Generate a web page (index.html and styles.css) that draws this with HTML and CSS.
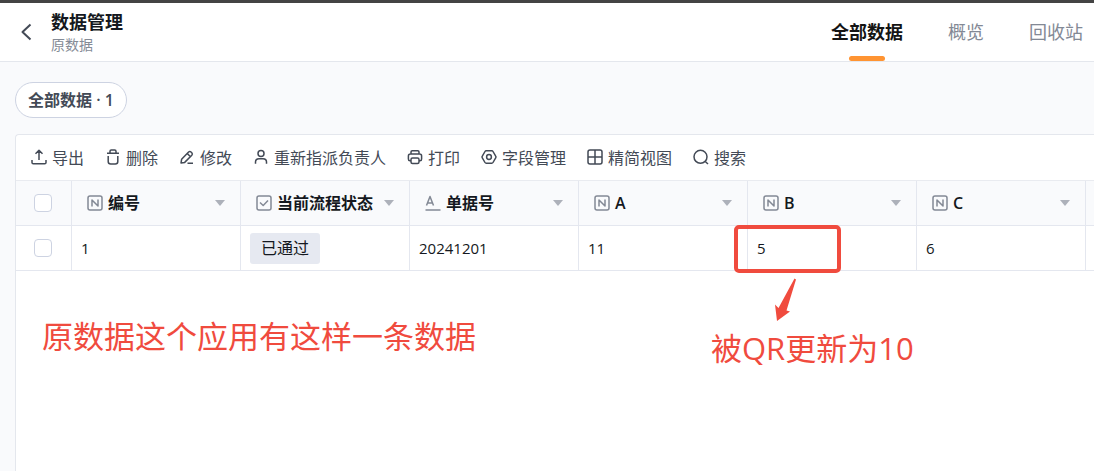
FILE: index.html
```html
<!DOCTYPE html>
<html lang="zh-CN">
<head>
<meta charset="UTF-8">
<meta name="viewport" content="width=device-width, initial-scale=1.0">
<title>数据管理</title>
<link rel="stylesheet" href="styles.css">
</head>
<body>

<!-- Shared icons -->
<svg class="sprite" aria-hidden="true">
    <symbol id="icon-number" viewBox="0 0 16 16">
        <rect x="1" y="1" width="14" height="14" rx="2"/>
        <path d="M5 11.5V5L11 11V4.5"/>
    </symbol>
    <symbol id="icon-select" viewBox="0 0 16 16">
        <rect x="1" y="1" width="14" height="14" rx="2"/>
        <path d="M4 7.5L7.2 10.5L12 5.5"/>
    </symbol>
    <symbol id="icon-text" viewBox="0 0 16 16">
        <path d="M1.5 10.5L5 1.5L8.5 10.5M2.7 8H7.3M.5 15H15.5"/>
    </symbol>
</svg>

<header class="header">
    <button class="back-btn" type="button" aria-label="返回">
        <svg viewBox="0 0 12 18"><path d="M10.5 1.5L2.5 9L10.5 16.5"/></svg>
    </button>
    <div class="title">
        <h1>数据管理</h1>
        <p>原数据</p>
    </div>
    <nav class="tabs">
        <a href="#all" class="active">全部数据</a>
        <a href="#overview">概览</a>
        <a href="#trash">回收站</a>
    </nav>
</header>

<main class="main">
    <button class="filter-btn" type="button">全部数据 · 1</button>

    <section class="panel">
        <div class="toolbar">
            <button type="button">
                <svg viewBox="0 0 16 16"><path d="M8 11V1.5M4.5 4.7L8 1.2L11.5 4.7M1 11V13.5Q1 14.8 2.3 14.8H13.7Q15 14.8 15 13.5V11"/></svg>
                导出
            </button>
            <button type="button">
                <svg viewBox="0 0 16 16"><path d="M2 4.2H14M5 4V2.3Q5 1 6.3 1H9.7Q11 1 11 2.3V4M3.2 7V12.5Q3.2 15 5.7 15H10.3Q12.8 15 12.8 12.5V7"/></svg>
                删除
            </button>
            <button type="button">
                <svg viewBox="0 0 16 16"><path d="M2 14L2.6 10.3L9.6 3Q10.8 1.9 12 3L12.8 3.8Q13.9 5 12.8 6.2L5.7 13.4ZM8.3 4.5L11.2 7.5M8.5 14.3H14"/></svg>
                修改
            </button>
            <button type="button">
                <svg viewBox="0 0 16 16"><circle cx="8" cy="4.5" r="3"/><path d="M2.5 14.8V13Q2.5 9.7 6 9.7H10Q13.5 9.7 13.5 13V14.8"/></svg>
                重新指派负责人
            </button>
            <button type="button">
                <svg viewBox="0 0 16 16"><path d="M4 5V3Q4 1.8 5.2 1.8H10.8Q12 1.8 12 3V5M4 11.8H3Q1.4 11.8 1.4 10V7Q1.4 5 3.4 5H12.6Q14.6 5 14.6 7V10Q14.6 11.8 13 11.8H12"/><rect x="4" y="9" width="8" height="5.5" rx="1.5"/></svg>
                打印
            </button>
            <button type="button">
                <svg viewBox="0 0 16 16"><path d="M5.2 1.8H10.8Q11.6 1.8 12 2.5L14.7 7.2Q15.2 8 14.7 8.8L12 13.5Q11.6 14.2 10.8 14.2H5.2Q4.4 14.2 4 13.5L1.3 8.8Q.8 8 1.3 7.2L4 2.5Q4.4 1.8 5.2 1.8Z"/><circle cx="8" cy="8" r="2.4"/></svg>
                字段管理
            </button>
            <button type="button">
                <svg viewBox="0 0 16 16"><rect x="1" y="1" width="14" height="14" rx="2"/><path d="M8 1V15M1 8H15"/></svg>
                精简视图
            </button>
            <button type="button">
                <svg viewBox="0 0 16 16"><circle cx="7.5" cy="7.8" r="6.5"/><path d="M12.3 12.5L15 15"/></svg>
                搜索
            </button>
        </div>

        <table class="data-table">
            <colgroup>
                <col class="col-check">
                <col class="col-field">
                <col class="col-field">
                <col class="col-field">
                <col class="col-field">
                <col class="col-field">
                <col class="col-field">
                <col>
            </colgroup>
            <thead>
                <tr>
                    <th class="check"><input type="checkbox" aria-label="全选"></th>
                    <th><div class="field"><svg><use href="#icon-number"/></svg>编号<span class="arrow"></span></div></th>
                    <th><div class="field"><svg><use href="#icon-select"/></svg>当前流程状态<span class="arrow"></span></div></th>
                    <th><div class="field"><svg><use href="#icon-text"/></svg>单据号<span class="arrow"></span></div></th>
                    <th><div class="field"><svg><use href="#icon-number"/></svg>A<span class="arrow"></span></div></th>
                    <th><div class="field"><svg><use href="#icon-number"/></svg>B<span class="arrow"></span></div></th>
                    <th><div class="field"><svg><use href="#icon-number"/></svg>C<span class="arrow"></span></div></th>
                    <th></th>
                </tr>
            </thead>
            <tbody>
                <tr>
                    <td class="check"><input type="checkbox" aria-label="选择第 1 行"></td>
                    <td>1</td>
                    <td><span class="status">已通过</span></td>
                    <td>20241201</td>
                    <td>11</td>
                    <td class="marked">5
                        <div class="mark-box"></div>
                        <div class="mark-note">
                            <svg viewBox="0 0 24 44"><path d="M21.5 0.5L23 1.5L13.5 32.5L17 33.5L4 43L2 26.5L5.5 30Z"/></svg>
                            <p>被QR更新为10</p>
                        </div>
                    </td>
                    <td>6</td>
                    <td></td>
                </tr>
            </tbody>
        </table>

        <p class="note">原数据这个应用有这样一条数据</p>
    </section>
</main>

</body>
</html>
```
FILE: styles.css
```css
* {
    box-sizing: border-box;
}

body {
    margin: 0;
    min-height: 100vh;
    display: flex;
    flex-direction: column;
    overflow-x: hidden;
    font-family: "Open Sans", "Noto Sans CJK SC", sans-serif;
    font-size: 16px;
    color: #141820;
    background-color: #f9fafc;
    border-top: 3px solid #444;
}

h1,
p {
    margin: 0;
}

button {
    font-family: inherit;
    font-size: 16px;
    color: #434a56;
    cursor: pointer;
}

svg {
    fill: none;
    stroke: currentColor;
    stroke-width: 1.5;
    stroke-linejoin: round;
}

.sprite {
    display: none;
}

/* Header */
.header {
    display: flex;
    align-items: center;
    height: 59px;
    padding: 0 11px 0 20px;
    background-color: #fff;
    border-bottom: 1px solid #e4e7ed;
}

.back-btn {
    display: flex;
    padding: 0;
    border: none;
    background: none;
}

.back-btn svg {
    width: 12px;
    height: 18px;
    stroke-width: 2;
}

.title {
    margin-left: 19px;
    padding-top: 2px;
}

.title h1 {
    font-size: 18px;
    line-height: 24px;
}

.title p {
    font-size: 14px;
    line-height: 22px;
    color: #858b96;
}

.tabs {
    display: flex;
    align-self: stretch;
    gap: 45px;
    margin-left: auto;
}

.tabs a {
    display: flex;
    flex-direction: column;
    align-items: center;
    justify-content: space-between;
    font-size: 18px;
    line-height: 58px;
    color: #838995;
    text-decoration: none;
}

.tabs .active {
    font-weight: bold;
    color: #141414;
}

.tabs .active::after {
    content: "";
    width: 36px;
    height: 5px;
    margin-top: -5px;
    border-radius: 3px;
    background-color: #ff9432;
}

/* Content */
.main {
    flex: 1;
    display: flex;
    flex-direction: column;
    align-items: flex-start;
    gap: 16px;
    padding: 20px 0 0 15px;
}

.filter-btn {
    height: 36px;
    padding: 0 12px 2px;
    font-weight: 600;
    border: 1px solid #cdd3e2;
    border-radius: 18px;
    background-color: #fff;
}

.panel {
    flex: 1;
    align-self: stretch;
    background-color: #fff;
    border: 1px solid #e4e7ed;
    border-width: 1px 0 0 1px;
    border-radius: 4px 0 0 0;
}

.toolbar {
    display: flex;
    align-items: center;
    gap: 21px;
    height: 45px;
    padding: 0 15px 2px;
}

.toolbar button {
    display: flex;
    align-items: center;
    gap: 5px;
    padding: 0;
    border: none;
    background: none;
    white-space: nowrap;
}

.toolbar svg,
.field svg {
    flex: none;
    width: 16px;
    height: 16px;
}

/* Table */
.data-table {
    width: 100%;
    table-layout: fixed;
    border-collapse: separate;
    border-spacing: 0;
    border-top: 1px solid #e9ebf0;
}

.col-check {
    width: 56px;
}

.col-field {
    width: 169px;
}

.data-table th,
.data-table td {
    height: 45px;
    padding: 0 9px;
    text-align: left;
    border-right: 1px solid #e4e7ef;
    border-bottom: 1px solid #e4e7ef;
}

.data-table th:last-child,
.data-table td:last-child {
    padding: 0;
    border-right: none;
}

.data-table th {
    font-weight: 600;
    background-color: #f9fafc;
}

.data-table td {
    font-size: 15px;
}

.data-table .check {
    padding: 0 2px 0 0;
    text-align: center;
}

.data-table input {
    appearance: none;
    display: block;
    width: 18px;
    height: 18px;
    margin: 0 auto;
    border: 1px solid #cdd3e2;
    border-radius: 4px;
    background-color: #fff;
}

.field {
    display: flex;
    align-items: center;
    gap: 5px;
    padding: 0 6px;
    line-height: 20px;
    white-space: nowrap;
}

.field svg {
    color: #838995;
}

.arrow {
    margin-left: auto;
    border: 5px solid transparent;
    border-top: 6px solid #adb1ba;
    border-bottom: none;
}

.status {
    display: inline-block;
    padding: 0 11px;
    font-size: 16px;
    line-height: 31px;
    border-radius: 3px;
    background-color: #e6e9f1;
}

/* Red annotations */
.note,
.mark-note {
    font-size: 31px;
    line-height: 42px;
    color: #f04b3e;
}

.note {
    padding: 44px 26px;
}

.marked {
    position: relative;
}

.mark-box {
    position: absolute;
    top: -1px;
    left: -14px;
    width: 107px;
    height: 48px;
    border: 4px solid #f04b3e;
    border-radius: 5px;
}

.mark-note {
    position: absolute;
    top: 52px;
    left: -37px;
    white-space: nowrap;
}

.mark-note svg {
    display: block;
    width: 24px;
    height: 44px;
    margin-left: 62px;
    fill: currentColor;
    stroke: none;
}

.mark-note p {
    margin-top: 5px;
}
```
